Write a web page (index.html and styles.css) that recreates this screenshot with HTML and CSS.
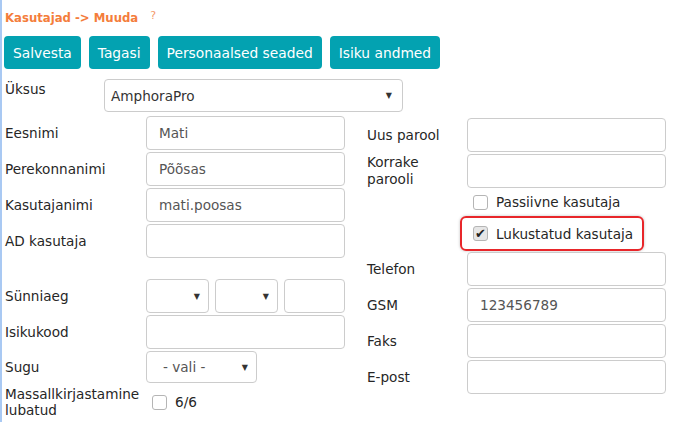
FILE: index.html
```html
<!DOCTYPE html>
<html lang="et">
<head>
<meta charset="utf-8">
<title>Kasutajad -&gt; Muuda</title>
<link rel="stylesheet" href="styles.css">
</head>
<body>
<div class="page">
  <div class="title"><span class="crumb">Kasutajad -&gt; Muuda</span><span class="help">?</span></div>
  <div class="toolbar">
    <button class="btn">Salvesta</button>
    <button class="btn">Tagasi</button>
    <button class="btn">Personaalsed seaded</button>
    <button class="btn">Isiku andmed</button>
  </div>
  <div class="unit-row">
    <div class="unit-label">Üksus</div>
    <div class="select unit-select"><span class="val">AmphoraPro</span><span class="arrow">▼</span></div>
  </div>
  <div class="columns">
    <div class="col left">
      <div class="row"><div class="lbl">Eesnimi</div><div class="input">Mati</div></div>
      <div class="row"><div class="lbl">Perekonnanimi</div><div class="input">Põõsas</div></div>
      <div class="row"><div class="lbl">Kasutajanimi</div><div class="input">mati.poosas</div></div>
      <div class="row"><div class="lbl">AD kasutaja</div><div class="input"></div></div>
      <div class="row birth"><div class="lbl">Sünniaeg</div>
        <div class="date">
          <div class="select small"><span class="arrow">▼</span></div>
          <div class="select small"><span class="arrow">▼</span></div>
          <div class="input year"></div>
        </div>
      </div>
      <div class="row"><div class="lbl">Isikukood</div><div class="input"></div></div>
      <div class="row"><div class="lbl">Sugu</div><div class="select gender"><span class="val">- vali -</span><span class="arrow">▼</span></div></div>
      <div class="row mass"><div class="lbl two">Massallkirjastamine lubatud</div><div class="check-line"><span class="cb"></span><span>6/6</span></div></div>
    </div>
    <div class="col right">
      <div class="row"><div class="lbl r">Uus parool</div><div class="input"></div></div>
      <div class="row"><div class="lbl r two">Korrake parooli</div><div class="input"></div></div>
      <div class="cb-row"><span class="cb"></span><span>Passiivne kasutaja</span></div>
      <div class="cb-row highlight"><span class="cb checked">✔</span><span>Lukustatud kasutaja</span></div>
      <div class="row"><div class="lbl r">Telefon</div><div class="input"></div></div>
      <div class="row"><div class="lbl r">GSM</div><div class="input">123456789</div></div>
      <div class="row"><div class="lbl r">Faks</div><div class="input"></div></div>
      <div class="row"><div class="lbl r">E-post</div><div class="input"></div></div>
    </div>
  </div>
</div>
</body>
</html>
```
FILE: styles.css
```css
html, body {
  margin: 0;
  padding: 0;
  background: #fff;
}
body {
  font-family: "DejaVu Sans", Verdana, sans-serif;
  font-size: 13.6px;
  color: #262626;
  border-left: 2px solid #a9c9f3;
  min-height: 422px;
  box-sizing: border-box;
}
.page {
  padding-left: 3px;
}
.title {
  height: 36px;
  padding-top: 8px;
  box-sizing: border-box;
  line-height: 16px;
}
.crumb {
  font-weight: bold;
  font-size: 11.7px;
  color: #f47d3b;
}
.help {
  font-size: 11px;
  color: #f49a6a;
  margin-left: 12px;
  vertical-align: 3px;
}
.toolbar {
  display: flex;
  gap: 8px;
  margin-left: -1px;
  height: 33px;
}
.btn {
  background: #03a2b1;
  color: #fff;
  border: none;
  border-radius: 4px;
  font-family: "DejaVu Sans", Verdana, sans-serif;
  font-size: 13.8px;
  padding: 0 9px;
  height: 33px;
}
.unit-row {
  display: flex;
  margin-top: 10px;
  height: 33px;
}
.unit-label {
  width: 99px;
  padding-top: 2px;
}
.select, .input {
  border: 1px solid #ccc;
  border-radius: 4px;
  box-sizing: border-box;
  background: #fff;
  display: flex;
  align-items: center;
  color: #555;
}
.unit-select {
  width: 299px;
  height: 33px;
  padding: 0 10px 0 6px;
  justify-content: space-between;
  color: #333;
}
.arrow {
  font-size: 8px;
  color: #333;
}
.columns {
  display: flex;
  margin-top: 4px;
}
.col {
  display: flex;
  flex-direction: column;
  gap: 2px;
}
.left {
  width: 362px;
}
.right {
  padding-top: 2px;
}
.row {
  display: flex;
  align-items: center;
}
.lbl {
  width: 141px;
  line-height: 16px;
}
.lbl.r {
  width: 100px;
  padding-right: 20px;
  box-sizing: border-box;
}
.input {
  width: 199px;
  height: 34px;
  padding-left: 12px;
}
.birth {
  margin-top: 19px;
}
.date {
  display: flex;
  gap: 6px;
}
.select.small {
  width: 63px;
  height: 34px;
  justify-content: flex-end;
  padding-right: 8px;
}
.input.year {
  width: 61px;
}
.select.gender {
  width: 111px;
  height: 32px;
  padding: 0 8px 0 16px;
  justify-content: space-between;
}
.mass {
  align-items: flex-start;
  margin-top: 1px;
}
.lbl.two {
  line-height: 16px;
}
.lbl.r.two {
  line-height: 17px;
}
.mass .lbl {
  width: 147px;
}
.check-line {
  display: flex;
  align-items: center;
  gap: 8px;
  padding-top: 8px;
}
.cb {
  width: 15px;
  height: 15px;
  border: 1px solid #b5b5b5;
  border-radius: 3px;
  box-sizing: border-box;
  background: #fff;
  display: inline-flex;
  align-items: center;
  justify-content: center;
  font-size: 13px;
  font-weight: bold;
  color: #222;
  line-height: 1;
}
.cb.checked {
  background: #e6e6e6;
}
.cb-row {
  display: flex;
  align-items: center;
  gap: 8px;
  height: 24px;
  padding-left: 106px;
}
.cb-row.highlight {
  height: 35px;
  width: 184px;
  box-sizing: border-box;
  margin-left: 93px;
  padding-left: 11px;
  border: 2px solid #e8262a;
  border-radius: 6px;
  box-shadow: 0 0 3px rgba(0,0,0,0.25);
  margin-bottom: -1px;
}
```
